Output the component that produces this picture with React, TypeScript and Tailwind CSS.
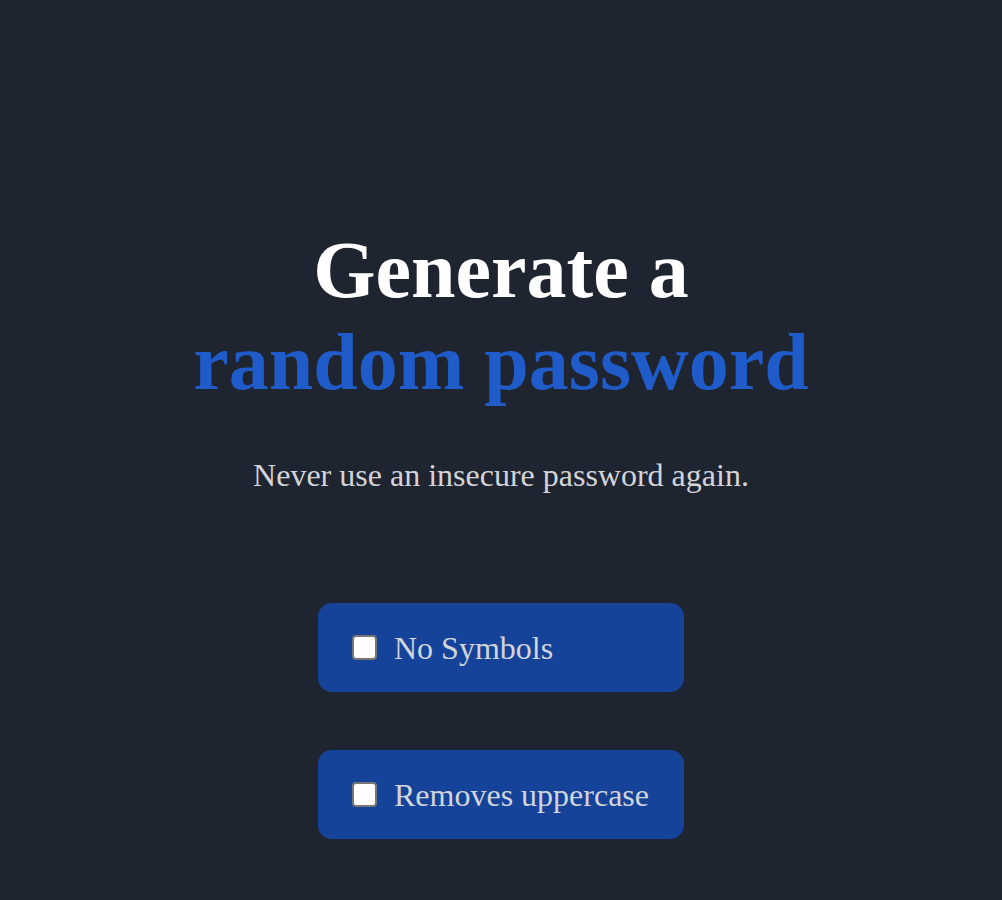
import { useState } from 'react';

const serif = { fontFamily: '"Liberation Serif", "Times New Roman", serif' };

function Option({ label }: { label: string }) {
  const [checked, setChecked] = useState(false);
  return (
    <label className="flex items-center w-[366px] h-[89px] pl-[34px] rounded-[14px] bg-[#15439a] cursor-pointer select-none">
      <input
        type="checkbox"
        checked={checked}
        onChange={() => setChecked(!checked)}
        className="appearance-none w-[25px] h-[25px] rounded-[4px] border-2 border-[#767676] bg-white checked:bg-[#1f5bc9] shrink-0"
      />
      <span className="ml-[17px] text-[32px] leading-none text-[#d1d5db]">{label}</span>
    </label>
  );
}

export default function App() {
  return (
    <div className="min-h-[900px] bg-[#1f2530] flex flex-col items-center pt-[224px]" style={serif}>
      <h1 className="text-[80px] leading-[92px] font-bold text-center">
        <span className="text-white">Generate a</span>
        <br />
        <span className="text-[#1f5bc9]">random password</span>
      </h1>
      <p className="mt-[49px] text-[32px] leading-[37px] text-[#d4d4d8]">
        Never use an insecure password again.
      </p>
      <div className="mt-[109px] flex flex-col gap-[58px]">
        <Option label="No Symbols" />
        <Option label="Removes uppercase" />
      </div>
    </div>
  );
}
